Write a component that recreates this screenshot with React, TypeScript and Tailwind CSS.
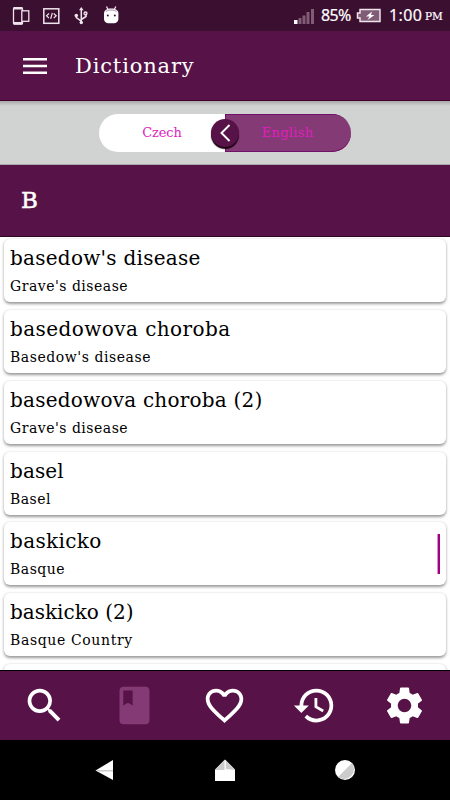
import React from "react";
import { MdSearch, MdBook, MdFavoriteBorder, MdHistory, MdSettings } from "react-icons/md";

const entries = [
  { word: "basedow's disease", meaning: "Grave's disease", w: "tracking-[0.26px]", m: "tracking-[0.5px]" },
  { word: "basedowova choroba", meaning: "Basedow's disease", w: "tracking-[0.43px]", m: "tracking-[0.55px]" },
  { word: "basedowova choroba (2)", meaning: "Grave's disease", w: "tracking-[0.23px]", m: "tracking-[0.5px]" },
  { word: "basel", meaning: "Basel", w: "tracking-[0.1px]", m: "tracking-[0.45px]" },
  { word: "baskicko", meaning: "Basque", w: "tracking-[0.35px]", m: "tracking-[0.5px]" },
  { word: "baskicko (2)", meaning: "Basque Country", w: "tracking-[0px]", m: "tracking-[0.63px]" },
  { word: "", meaning: "", w: "", m: "" },
];

function StatusBar() {
  return (
    <div className="flex h-[31px] shrink-0 items-center bg-[#3b0f30] text-white">
      <svg className="ml-3 shrink-0" width="110" height="31" viewBox="0 0 110 31" fill="none" stroke="#eee4eb" strokeWidth="1.3">
        <rect x="1.5" y="8" width="9" height="16" rx="1" />
        <path d="M1.500 8.300h9M1.500 23.300h9" strokeWidth="2.400" />
        <rect x="9.8" y="10.8" width="7" height="10.5" fill="#3b0f30" />
        <rect x="31.8" y="8.800" width="15" height="14.500" strokeWidth="1.500" />
        <path d="M37 13.500l-2.500 2.300 2.500 2.300M41.700 13.500l2.500 2.300-2.500 2.300M40.300 12.800l-1.600 6" strokeWidth="1.200" />
        <path d="M69.300 9v14M64.300 16v1.500l5 3.700M74 13.500v3l-4.700 3" strokeWidth="1.500" />
        <path d="M69.300 7l-2.300 3.300h4.600z" fill="#eee4eb" stroke="none" />
        <circle cx="69.300" cy="22.500" r="1.700" fill="#eee4eb" stroke="none" />
        <circle cx="64.300" cy="15.500" r="1.800" fill="#eee4eb" stroke="none" />
        <circle cx="73.500" cy="13.500" r="1.500" />
        <path d="M94.500 6.500l1.500 3M103.800 6.500l-1.500 3" />
        <path d="M92 13.300c0-3 3-4.800 7.200-4.800s7.200 1.800 7.200 4.800V19c0 2.500-2 4.300-4.500 4.300h-5.400C94 23.300 92 21.500 92 19z" fill="#fff" stroke="none" />
        <path d="M94 11.500c2-2 8.500-2 10.500 0" stroke="#c5b2c0" />
        <circle cx="95.800" cy="15.500" r="1" fill="#3b0f30" stroke="none" />
        <circle cx="102.800" cy="15.500" r="1" fill="#3b0f30" stroke="none" />
      </svg>
      <div className="flex-1" />
      <svg className="shrink-0" width="21" height="16" viewBox="0 0 21 16">
        <path d="M0 12h3.500v4H0z" fill="#fff" />
        <path fill="#805c76" d="M4.500 10h3v6h-3zM8.500 7.500h3V16h-3zM12.500 4h3v12h-3zM17 1h3v15h-3z" />
      </svg>
      <span className="ml-[6px] w-[35px] shrink-0 whitespace-nowrap font-['Noto_Sans',sans-serif] text-[16px] leading-[31px] tracking-[-0.6px] [-webkit-text-stroke:0.2px_white]">85%</span>
      <svg className="shrink-0" width="26" height="15" viewBox="0 0 26 15">
        <path d="M4 1.500h20v12H4V10H1.500V5H4z" fill="#805c76" stroke="#eee4eb" strokeWidth="1.500" />
        <path d="M16 3.500l-6 5h3.500l-2 3.500 7-5H15z" fill="#fff" />
      </svg>
      <span className="ml-[7px] w-[36px] shrink-0 whitespace-nowrap font-['Noto_Sans',sans-serif] text-[16px] leading-[31px] tracking-[0.400px] [-webkit-text-stroke:0.2px_white]">1:00</span>
      <span className="mt-[2px] w-[25px] shrink-0 text-[10.500px] [-webkit-text-stroke:0.2px_white]">PM</span>
    </div>
  );
}

function LanguageSwitch() {
  return (
    <div className="flex h-16 shrink-0 justify-center border-b border-[#a9a7a9] bg-[#d1d3d2] bg-linear-to-b from-[#aaa8aa] to-[#d1d3d2] to-[5px] pt-[13px]">
      <div className="relative flex h-[38px] w-[252px] text-[13px] leading-[37px] text-[#e01cc0]">
        <div className="w-[126px] rounded-l-full bg-white text-center tracking-[-0.1px]">Czech</div>
        <div className="w-[126px] rounded-r-full bg-[#843a74] pr-px text-center tracking-[0.300px] shadow-[inset_1px_1px_0_#73106a,inset_0_-1px_0_#73106a]">English</div>
        <div className="absolute left-[112px] top-[5px] flex size-[28px] items-center justify-center rounded-full bg-[#571347] shadow-[0_2px_1px_#18000f]">
          <svg width="11" height="18" viewBox="0 0 11 18" fill="none" stroke="white" strokeWidth="1.900"><path d="M9.500 1L1.500 9l8 8" /></svg>
        </div>
      </div>
    </div>
  );
}

export default function App() {
  return (
    <div className="flex h-[800px] w-[450px] flex-col overflow-hidden bg-white font-['DejaVu_Serif',serif]">
      <StatusBar />
      <header className="flex h-[70px] shrink-0 items-center border-b border-[#42002f] bg-[#571347] text-white">
        <svg className="ml-[23px]" width="24" height="16" viewBox="0 0 24 16"><path d="M0 0h24v2.600H0zM0 6.700h24v2.600H0zM0 13.400h24V16H0z" fill="#fff" /></svg>
        <h1 className="ml-[28px] text-[21px] leading-[30px] tracking-[0.850px]">Dictionary</h1>
      </header>
      <LanguageSwitch />
      <div className="flex h-[72px] shrink-0 items-center border-b border-[#2b0720] bg-[#571347] pl-[21px] text-[23px] text-white [-webkit-text-stroke:0.500px_white]">B</div>
      <main className="relative flex min-h-0 flex-1 flex-col gap-[7.850px] overflow-hidden px-1 pt-[2px]">
        {entries.map((e, i) => (
          <section key={i} className="h-[63px] shrink-0 rounded-[6px] bg-white px-1.5 shadow-[0_1.500px_3px_rgba(0,0,0,0.4)]">
            <h2 className={`h-[38px] whitespace-nowrap text-[20px] leading-[38px] ${e.w}`}>{e.word}</h2>
            <p className={`whitespace-nowrap text-[14px] leading-[19px] ${e.m}`}>{e.meaning}</p>
          </section>
        ))}
        <div className="absolute right-[10px] top-[297px] h-10 w-[3px] border-l border-[#d690cc] bg-[#a00088]" />
      </main>
      <nav className="grid h-[70px] shrink-0 grid-cols-5 place-items-center border-t border-black bg-[#571347] pr-px pb-px text-white">
        <MdSearch size={45} />
        <MdBook size={45} className="text-[#843a74]" />
        <MdFavoriteBorder size={45} />
        <MdHistory size={45} />
        <MdSettings size={45} />
      </nav>
      <div className="flex h-[60px] shrink-0 items-center bg-black">
        <svg width="450" height="60" viewBox="0 0 450 60">
          <path d="M95.500 30.500L113 20v20z" fill="#fff" />
          <path d="M95.500 30H113v1.500H98z" fill="#ccc" />
          <path d="M215 29.500L225 19.500l10 10V41h-20z" fill="#fff" />
          <path d="M215 30l9.500-10v10zM225.800 20.500L235 30l-9.200-1z" fill="#ccc" />
          <circle cx="345" cy="30" r="10" fill="#fff" />
          <path d="M338 37A10 10 0 0 0 352 23z" fill="#ccc" />
        </svg>
      </div>
    </div>
  );
}
